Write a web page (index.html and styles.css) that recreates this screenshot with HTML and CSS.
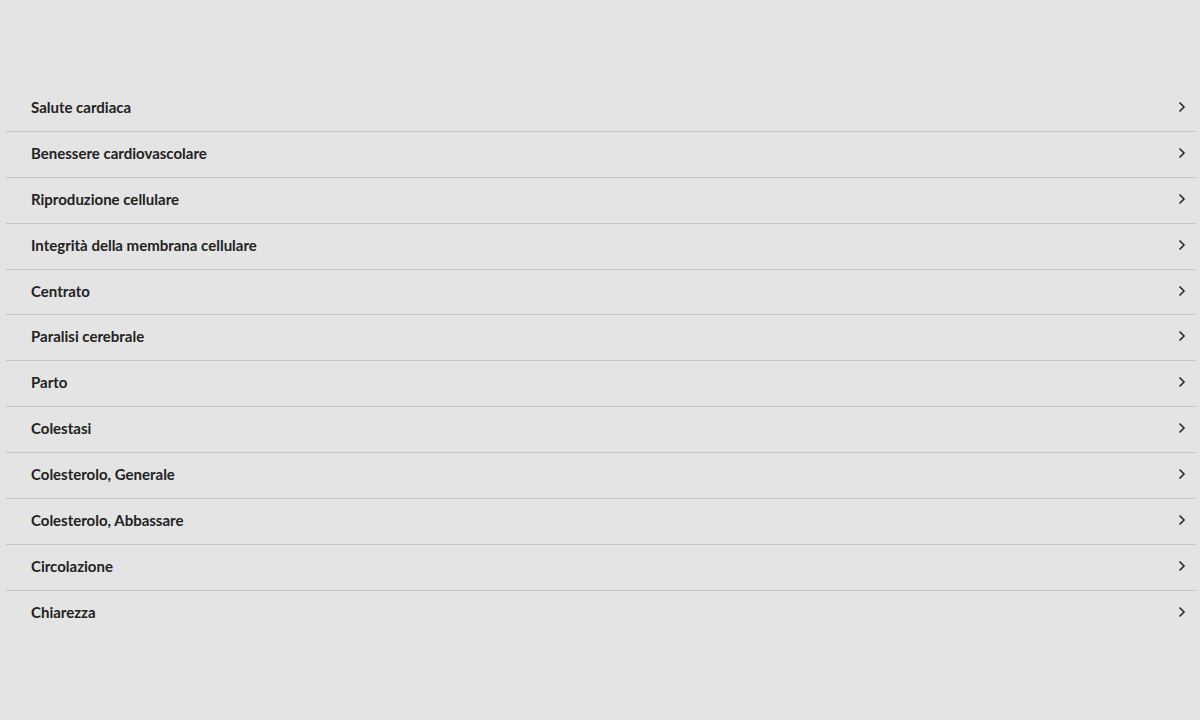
FILE: index.html
```html
<!DOCTYPE html>
<html lang="it">
<head>
    <meta charset="UTF-8">
    <meta name="viewport" content="width=device-width, initial-scale=1.0">
    <title>Categorie</title>
    <link rel="stylesheet" href="styles.css">
</head>
<body>
    <ul class="cat-list">
        <li class="cat-item"><span>Salute cardiaca</span><svg class="chev" viewBox="0 0 8 12"><path d="M1.5 1.5l4.5 4.5-4.5 4.5"/></svg></li>
        <li class="cat-item"><span>Benessere cardiovascolare</span><svg class="chev" viewBox="0 0 8 12"><path d="M1.5 1.5l4.5 4.5-4.5 4.5"/></svg></li>
        <li class="cat-item"><span>Riproduzione cellulare</span><svg class="chev" viewBox="0 0 8 12"><path d="M1.5 1.5l4.5 4.5-4.5 4.5"/></svg></li>
        <li class="cat-item"><span>Integrità della membrana cellulare</span><svg class="chev" viewBox="0 0 8 12"><path d="M1.5 1.5l4.5 4.5-4.5 4.5"/></svg></li>
        <li class="cat-item"><span>Centrato</span><svg class="chev" viewBox="0 0 8 12"><path d="M1.5 1.5l4.5 4.5-4.5 4.5"/></svg></li>
        <li class="cat-item"><span>Paralisi cerebrale</span><svg class="chev" viewBox="0 0 8 12"><path d="M1.5 1.5l4.5 4.5-4.5 4.5"/></svg></li>
        <li class="cat-item"><span>Parto</span><svg class="chev" viewBox="0 0 8 12"><path d="M1.5 1.5l4.5 4.5-4.5 4.5"/></svg></li>
        <li class="cat-item"><span>Colestasi</span><svg class="chev" viewBox="0 0 8 12"><path d="M1.5 1.5l4.5 4.5-4.5 4.5"/></svg></li>
        <li class="cat-item"><span>Colesterolo, Generale</span><svg class="chev" viewBox="0 0 8 12"><path d="M1.5 1.5l4.5 4.5-4.5 4.5"/></svg></li>
        <li class="cat-item"><span>Colesterolo, Abbassare</span><svg class="chev" viewBox="0 0 8 12"><path d="M1.5 1.5l4.5 4.5-4.5 4.5"/></svg></li>
        <li class="cat-item"><span>Circolazione</span><svg class="chev" viewBox="0 0 8 12"><path d="M1.5 1.5l4.5 4.5-4.5 4.5"/></svg></li>
        <li class="cat-item"><span>Chiarezza</span><svg class="chev" viewBox="0 0 8 12"><path d="M1.5 1.5l4.5 4.5-4.5 4.5"/></svg></li>
    </ul>
</body>
</html>
```

FILE: styles.css
```css
html { background: #e4e4e4; }
body { margin: 0; padding: 86px 4px 0 6px; font-family: Lato, "Open Sans", sans-serif; color: #222; }
.cat-list { list-style: none; margin: 0; padding: 0; }
.cat-item {
    display: flex;
    align-items: center;
    justify-content: space-between;
    box-sizing: border-box;
    height: 45.9px;
    padding: 0 10px 3px 25px;
    border-bottom: 1px solid #c6c6c6;
    font-size: 15px;
    font-weight: bold;
}
.cat-item:last-child { border-bottom: none; }
.chev { width: 8px; height: 12px; fill: none; stroke: #2a2a2a; stroke-width: 1.6; }
```
